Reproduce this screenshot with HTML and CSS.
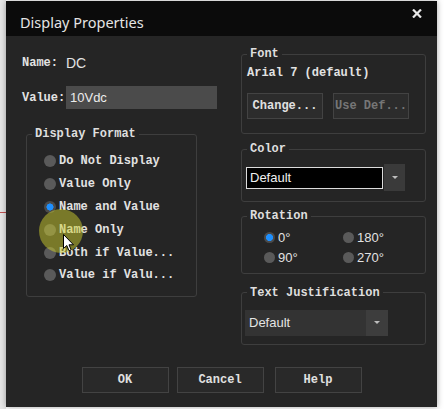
FILE: index.html
```html
<!DOCTYPE html>
<html>
<head>
<meta charset="utf-8">
<link rel="stylesheet" href="styles.css">
</head>
<body>
<div class="wire"></div>
<div class="dialog">
  <div class="titlebar">
    <span class="title">Display Properties</span>
    <svg class="close" width="10" height="9" viewBox="0 0 10 9"><path d="M1 0.5 L9 8.5 M9 0.5 L1 8.5" stroke="#e8e8e8" stroke-width="2.2" fill="none"/></svg>
  </div>
  <div class="main">
    <div class="left">
      <div class="row name-row"><span class="lbl">Name:</span><span class="val">DC</span></div>
      <div class="row value-row"><span class="lbl">Value:</span><div class="input">10Vdc</div></div>
      <fieldset class="group df">
        <legend>Display Format</legend>
        <div class="df-body">
          <div class="radio"><span class="dot"></span><span class="mono">Do Not Display</span></div>
          <div class="radio"><span class="dot"></span><span class="mono">Value Only</span></div>
          <div class="radio"><span class="dot on"></span><span class="mono">Name and Value</span></div>
          <div class="radio"><span class="dot"></span><span class="mono">Name Only</span></div>
          <div class="radio"><span class="dot"></span><span class="mono">Both if Value...</span></div>
          <div class="radio"><span class="dot"></span><span class="mono">Value if Valu...</span></div>
        </div>
      </fieldset>
    </div>
    <div class="right">
      <fieldset class="group font">
        <legend>Font</legend>
        <div class="font-body">
          <div class="mono font-name">Arial 7 (default)</div>
          <div class="font-btns">
            <div class="btn small">Change...</div>
            <div class="btn small disabled">Use Def...</div>
          </div>
        </div>
      </fieldset>
      <fieldset class="group color">
        <legend>Color</legend>
        <div class="color-body">
          <div class="color-box">Default</div>
          <div class="drop-btn"><span class="arrow"></span></div>
        </div>
      </fieldset>
      <fieldset class="group rotation">
        <legend>Rotation</legend>
        <div class="rot-body">
          <div class="rradio"><span class="dot on"></span><span>0°</span></div>
          <div class="rradio"><span class="dot"></span><span>180°</span></div>
          <div class="rradio"><span class="dot"></span><span>90°</span></div>
          <div class="rradio"><span class="dot"></span><span>270°</span></div>
        </div>
      </fieldset>
      <fieldset class="group tj">
        <legend>Text Justification</legend>
        <div class="tj-body">
          <div class="tj-select"><span class="tj-text">Default</span><span class="tj-arrow"><span class="arrow"></span></span></div>
        </div>
      </fieldset>
    </div>
  </div>
  <div class="buttons">
    <div class="btn big">OK</div>
    <div class="btn big">Cancel</div>
    <div class="btn big help">Help</div>
  </div>
  <div class="highlight"></div>
  <svg class="cursor" width="12" height="18" viewBox="0 0 12 18"><path d="M0.5 0.5 L0.5 14.5 L3.8 11.5 L6 16.8 L8.2 15.9 L6 10.8 L10.5 10.8 Z" fill="#ffffff" stroke="#000000" stroke-width="1"/></svg>
</div>
</body>
</html>
```
FILE: styles.css
```css
html, body {
  margin: 0;
  padding: 0;
  background: #ffffff;
}
body {
  width: 447px;
  height: 409px;
  overflow: hidden;
  background: linear-gradient(to right, #e6e6e6 0, #e6e6e6 6px, #ffffff 6px);
  position: relative;
}
.wire {
  position: absolute;
  left: 0;
  top: 212px;
  width: 6px;
  height: 1px;
  background: #c05050;
}
.dialog {
  position: relative;
  margin: 1px 0 0 6px;
  width: 431px;
  height: 406px;
  background: #252525;
  box-shadow: 0 0 6px rgba(0,0,0,0.35);
  color: #e2e2e2;
  font-family: "Liberation Mono", monospace;
  font-size: 12px;
  font-weight: bold;
}
.titlebar {
  height: 35px;
  background: #0b0b0b;
  display: flex;
  justify-content: space-between;
  align-items: flex-start;
}
.title {
  font-family: "Noto Sans", "Open Sans", sans-serif;
  font-weight: normal;
  font-size: 14.5px;
  line-height: 21px;
  padding: 11px 0 0 14px;
  color: #e4e4e4;
}
.close {
  margin: 8px 15px 0 0;
}
.main {
  display: flex;
  align-items: flex-start;
}
.left {
  flex: 0 0 235px;
  box-sizing: border-box;
  padding-left: 16px;
}
.row {
  display: flex;
  align-items: center;
}
.lbl {
  width: 44px;
  font-family: "Liberation Mono", monospace;
  font-size: 12px;
}
.name-row {
  margin-top: 18px;
  height: 18px;
}
.val {
  font-family: "Liberation Sans", sans-serif;
  font-weight: normal;
  font-size: 14px;
}
.value-row {
  margin-top: 14px;
  height: 23px;
}
.input {
  width: 151px;
  height: 23px;
  box-sizing: border-box;
  background: #4b4b4b;
  padding-left: 4px;
  font-family: "Liberation Sans", sans-serif;
  font-weight: normal;
  font-size: 13px;
  line-height: 23px;
  color: #ececec;
}
.group {
  padding: 0;
  border: 1px solid #3e3e3e;
  border-radius: 3px;
  min-width: 0;
}
legend {
  padding: 0 3px;
  margin-left: 5px;
  font-family: "Liberation Mono", monospace;
  font-size: 12px;
  line-height: 14px;
  color: #dedede;
}
.df {
  margin: 18px 0 0 4px;
  width: 171px;
  box-sizing: border-box;
}
.df-body {
  padding: 9px 0 9px 17px;
}
.radio {
  height: 22.8px;
  display: flex;
  align-items: center;
  gap: 3px;
}
.dot {
  width: 12px;
  height: 12px;
  border-radius: 50%;
  background: #5a5a5a;
  flex: 0 0 auto;
}
.dot.on {
  background: radial-gradient(circle, #1e90ff 0, #1e90ff 3.3px, #4a4a4a 3.8px);
}
.right {
  flex: 0 0 185px;
  margin-top: 11px;
}
.font {
  margin: 0;
}
.font-body {
  padding: 5px 0 14px 5px;
}
.font-name {
  line-height: 14px;
}
.font-btns {
  display: flex;
  gap: 10px;
  margin-top: 13px;
}
.btn {
  box-sizing: border-box;
  height: 26px;
  background: #2c2c2c;
  border: 1px solid #434343;
  display: flex;
  align-items: center;
  justify-content: center;
  font-family: "Liberation Mono", monospace;
  font-size: 12px;
  color: #e0e0e0;
}
.btn.small {
  width: 76px;
}
.btn.disabled {
  color: #767676;
}
.color {
  margin: 8px 0 0 0;
}
.color-body {
  display: flex;
  align-items: center;
  padding: 8px 0 10px 4px;
}
.color-box {
  width: 137px;
  height: 22px;
  box-sizing: border-box;
  background: #000;
  border: 1px solid #dcdcdc;
  font-family: "Liberation Sans", sans-serif;
  font-weight: normal;
  font-size: 13px;
  line-height: 20px;
  padding-left: 3px;
  color: #f0f0f0;
}
.drop-btn {
  width: 21px;
  height: 27px;
  margin-left: 1px;
  background: #3a3a3a;
  display: flex;
  align-items: center;
  justify-content: center;
}
.arrow {
  width: 0;
  height: 0;
  border-left: 3px solid transparent;
  border-right: 3px solid transparent;
  border-top: 3px solid #bdbdbd;
}
.rotation {
  margin: 7px 0 0 0;
}
.rot-body {
  display: grid;
  grid-template-columns: 79px 79px;
  grid-auto-rows: 19.4px;
  padding: 5px 0 6px 22px;
}
.rradio {
  display: flex;
  align-items: center;
  gap: 3px;
  font-family: "Liberation Sans", sans-serif;
  font-weight: normal;
  font-size: 13px;
}
.rradio .dot {
  width: 11px;
  height: 11px;
}
.tj {
  margin: 12px 0 0 0;
}
.tj-body {
  padding: 10px 0 8px 3px;
}
.tj-select {
  width: 143px;
  height: 26px;
  display: flex;
  background: #333333;
}
.tj-text {
  flex: 1;
  font-family: "Liberation Sans", sans-serif;
  font-weight: normal;
  font-size: 13px;
  line-height: 26px;
  padding-left: 4px;
  color: #e4e4e4;
}
.tj-arrow {
  width: 22px;
  background: #3d3d3d;
  display: flex;
  align-items: center;
  justify-content: center;
}
.buttons {
  display: flex;
  justify-content: center;
  gap: 8px;
  margin-top: 22px;
}
.btn.big {
  width: 87px;
  background: #292929;
}
.btn.help {
  margin-left: 3px;
}
.highlight {
  position: absolute;
  left: 33px;
  top: 208px;
  width: 44px;
  height: 44px;
  border-radius: 50%;
  background: rgba(205, 205, 45, 0.5);
  pointer-events: none;
}
.cursor {
  position: absolute;
  left: 57px;
  top: 233px;
}
```
